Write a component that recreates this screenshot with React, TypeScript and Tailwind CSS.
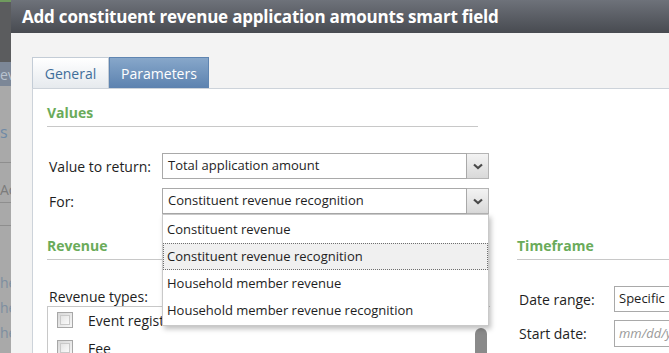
const font = "font-['Open_Sans',_'Noto_Sans',_sans-serif]";

function Chevron() {
  return (
    <svg width="10" height="7" viewBox="0 0 10 7" className="block">
      <path d="M1 1.5 L5 5 L9 1.5" fill="none" stroke="#4a4a4a" strokeWidth="2.2" />
    </svg>
  );
}

function Select({ value }: { value: string }) {
  return (
    <div className="flex h-[26px] w-[327px] shrink-0">
      <div className="flex flex-1 items-center border border-[#a9a9a9] bg-white pl-[5px] text-[13px] text-[#1e1e1e]">
        {value}
      </div>
      <div className="flex w-[22px] items-center justify-center border border-l-0 border-[#b4b4b4] bg-gradient-to-b from-[#f3f3f3] to-[#d9d9d9]">
        <Chevron />
      </div>
    </div>
  );
}

function SectionHeader({ title, className }: { title: string; className?: string }) {
  return (
    <div className={"border-b border-[#c8c8c8] pb-[3px] " + (className ?? "")}>
      <div className="text-[14px] font-bold leading-[20px] text-[#6aab5a]">{title}</div>
    </div>
  );
}

function Checkbox() {
  return (
    <div className="h-[16px] w-[16px] shrink-0 border border-[#a7a7a7] bg-gradient-to-br from-[#d8d8d8] to-[#f6f6f6] p-[2px]">
      <div className="h-full w-full border border-[#c9c9c9] bg-gradient-to-br from-[#e4e4e4] to-[#fafafa]" />
    </div>
  );
}

export default function App() {
  const options = [
    "Constituent revenue",
    "Constituent revenue recognition",
    "Household member revenue",
    "Household member revenue recognition",
  ];

  return (
    <div className={"relative flex h-[353px] w-[669px] overflow-hidden bg-[#f3f3f3] " + font}>
      {/* greyed application behind the dialog */}
      <div className="flex w-[11px] shrink-0 flex-col overflow-hidden whitespace-nowrap text-[14px] text-[#6f7f92]">
        <div className="h-[2px] shrink-0 bg-[#6f9a5e]" />
        <div className="h-[60px] shrink-0 bg-[#5b5c5e]" />
        <div className="flex h-[24px] shrink-0 items-center bg-[#7c8797] text-[#b9c3d0]">ev</div>
        <div className="flex flex-1 flex-col bg-[#a9a9a9]">
          <div className="mt-[36px] h-[20px] text-[16px] leading-[20px] text-[#6f8aa6]">s</div>
          <div className="mt-[20px] border-t border-[#8e8e8e]" />
          <div className="mt-[16px] text-[#7b7b7b]">Ac</div>
          <div className="mt-[2px] border-t border-[#8e8e8e]" />
          <div className="mt-[22px] border-t border-[#8e8e8e]" />
          <div className="mt-[44px] leading-[25px] text-[#7d8ea0]">he</div>
          <div className="leading-[25px] text-[#7d8ea0]">he</div>
          <div className="leading-[25px] text-[#7d8ea0]">he</div>
        </div>
      </div>

      {/* dialog */}
      <div className="flex min-w-0 flex-1 flex-col">
        <div className="flex h-[33px] shrink-0 items-center whitespace-nowrap bg-gradient-to-b from-[#6e727a] to-[#484b51] pl-[11px] text-[17px] font-bold tracking-[-0.2px] text-white">
          Add constituent revenue application amounts smart field
        </div>

        <div className="flex min-h-0 flex-1 flex-col pl-[21px] pt-[24px]">
          <div className="flex h-[31px] shrink-0 text-[14px]">
            <div className="flex w-[77px] items-center justify-center border border-b-0 border-[#c3ccd6] bg-gradient-to-b from-[#ffffff] to-[#e6eaee] text-[#3f6e9a]">
              General
            </div>
            <div className="flex w-[100px] items-center justify-center border border-b-0 border-[#5f85b1] bg-gradient-to-b from-[#87a7ca] to-[#5c82af] text-white">
              Parameters
            </div>
          </div>

          <div className="relative min-h-0 flex-1 border-l border-t border-[#cdd3da] bg-white pl-[14px] pt-[14px] text-[14px] text-[#1e1e1e]">
            <SectionHeader title="Values" className="w-[431px]" />

            <div className="mt-[26px] flex items-center">
              <div className="w-[115px] shrink-0 pl-[2px]">Value to return:</div>
              <Select value="Total application amount" />
            </div>
            <div className="mt-[9px] flex items-center">
              <div className="w-[115px] shrink-0 pl-[2px]">For:</div>
              <Select value="Constituent revenue recognition" />
            </div>

            <div className="mt-[22px] flex gap-[39px]">
              <div className="w-[431px] shrink-0">
                <SectionHeader title="Revenue" />
                <div className="mt-[28px] pl-[2px] leading-[18px]">Revenue types:</div>
                <div className="relative h-[60px] w-[443px] border border-r-0 border-[#c8c8c8]">
                  <div className="flex h-[20px] items-center gap-[15px] pl-[9px] mt-[3px]">
                    <Checkbox />
                    <span>Event registration</span>
                  </div>
                  <div className="mt-[8px] flex h-[20px] items-center gap-[15px] pl-[9px]">
                    <Checkbox />
                    <span>Fee</span>
                  </div>
                  <div className="absolute right-[3px] top-[21px] h-[40px] w-[12px] rounded-t-full bg-[#8a8a8a]" />
                </div>
              </div>
              <div className="min-w-0 flex-1">
                <SectionHeader title="Timeframe" />
                <div className="mt-[26px] flex items-center">
                  <div className="w-[97px] shrink-0 pl-[2px]">Date range:</div>
                  <div className="flex h-[26px] flex-1 items-center whitespace-nowrap border border-r-0 border-[#a9a9a9] pl-[4px] text-[13px]">
                    Specific
                  </div>
                </div>
                <div className="mt-[8px] flex items-center">
                  <div className="w-[97px] shrink-0 pl-[2px]">Start date:</div>
                  <div className="flex h-[27px] flex-1 items-center overflow-hidden whitespace-nowrap border border-r-0 border-[#a9a9a9] pl-[4px] text-[13px] italic text-[#9a9a9a]">
                    mm/dd/yyyy
                  </div>
                </div>
              </div>
            </div>

            {/* open dropdown list */}
            <div className="absolute left-[129px] top-[125px] w-[327px] border border-[#c9c9c9] bg-white py-[1px] text-[13px] shadow-[2px_3px_5px_rgba(0,0,0,0.25)]">
              {options.map((o, i) => (
                <div
                  key={o}
                  className={
                    "flex h-[27px] items-center " +
                    (i === 1 ? "border border-dotted border-[#6f6f6f] bg-[#f0f0f0] pl-[3px]" : "pl-[4px]")
                  }
                >
                  {o}
                </div>
              ))}
            </div>
          </div>
        </div>
      </div>
    </div>
  );
}
